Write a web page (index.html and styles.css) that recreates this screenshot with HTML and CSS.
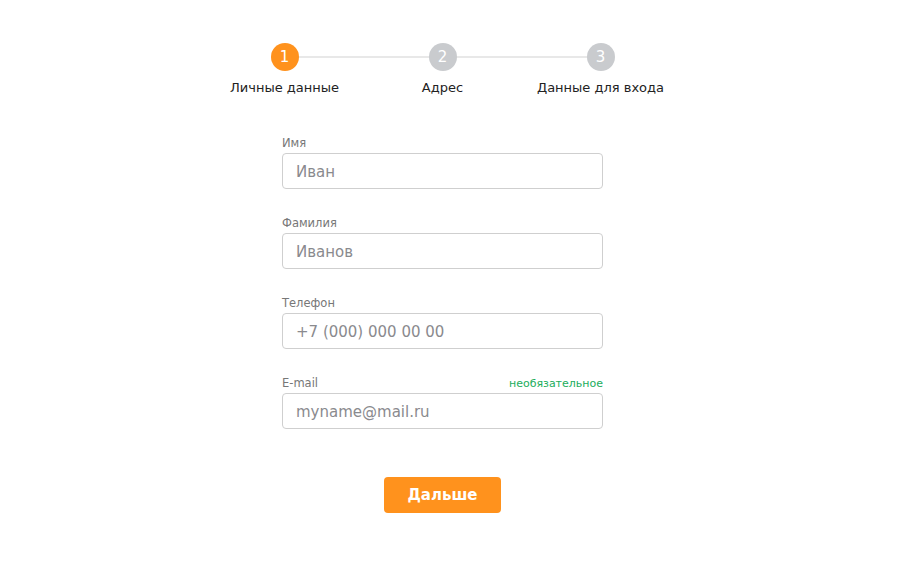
FILE: index.html
```html
<!DOCTYPE html>
<html lang="ru">
<head>
<meta charset="utf-8">
<title>Регистрация</title>
<link rel="stylesheet" href="styles.css">
</head>
<body>
<div class="page">
  <div class="stepper">
    <div class="step active"><span class="dot">1</span><span class="step-label">Личные данные</span></div>
    <div class="step"><span class="dot">2</span><span class="step-label">Адрес</span></div>
    <div class="step"><span class="dot">3</span><span class="step-label">Данные для входа</span></div>
  </div>
  <form class="form">
    <div class="field">
      <div class="label-row"><label>Имя</label></div>
      <input class="input" type="text" placeholder="Иван">
    </div>
    <div class="field">
      <div class="label-row"><label>Фамилия</label></div>
      <input class="input" type="text" placeholder="Иванов">
    </div>
    <div class="field">
      <div class="label-row"><label>Телефон</label></div>
      <input class="input" type="text" placeholder="+7 (000) 000 00 00">
    </div>
    <div class="field">
      <div class="label-row"><label>E-mail</label><span class="optional">необязательное</span></div>
      <input class="input" type="text" placeholder="myname@mail.ru">
    </div>
    <button class="btn" type="button">Дальше</button>
  </form>
</div>
</body>
</html>
```
FILE: styles.css
```css
* { box-sizing: border-box; }
html, body { margin: 0; padding: 0; background: #fff; }
body { font-family: "DejaVu Sans", "Open Sans", sans-serif; color: #222; }
.page { width: 885px; padding-top: 43px; }
.stepper {
  position: relative;
  width: 474px;
  margin: 0 auto;
  display: grid;
  grid-template-columns: repeat(3, 1fr);
}
.stepper::before {
  content: "";
  position: absolute;
  left: 79px; right: 79px; top: 13px;
  height: 2px;
  background: #e8e8e8;
}
.step { position: relative; display: flex; flex-direction: column; align-items: center; }
.dot {
  width: 28px; height: 28px; border-radius: 50%;
  background: #c9cbce; color: #fff;
  display: flex; align-items: center; justify-content: center;
  font-size: 15px;
}
.step.active .dot { background: #ff921d; }
.step-label { margin-top: 9px; font-size: 13px; line-height: 16px; color: #222; white-space: nowrap; }
.form { width: 321px; margin: 38px auto 0; display: flex; flex-direction: column; }
.field { display: flex; flex-direction: column; margin-bottom: 25px; }
.label-row { display: flex; justify-content: space-between; align-items: center; height: 17px; padding-top: 2px; margin-bottom: 2px; font-size: 11.5px; line-height: 15px; }
.label-row label { color: #777; }
.optional { color: #21ad5b; font-size: 11px; }
.input {
  height: 36px; width: 100%;
  border: 1px solid #cfcfcf; border-radius: 4px;
  padding: 1px 13px 0;
  font-family: inherit; font-size: 15px; color: #333;
  outline: none;
}
.input::placeholder { color: #8a8a8e; }
.btn {
  align-self: center;
  margin-top: 23px;
  width: 117px; height: 36px;
  border: none; border-radius: 4px;
  background: #ff921d; color: #fff;
  font-family: inherit; font-weight: 600; font-size: 15px;
  cursor: pointer;
}
```
